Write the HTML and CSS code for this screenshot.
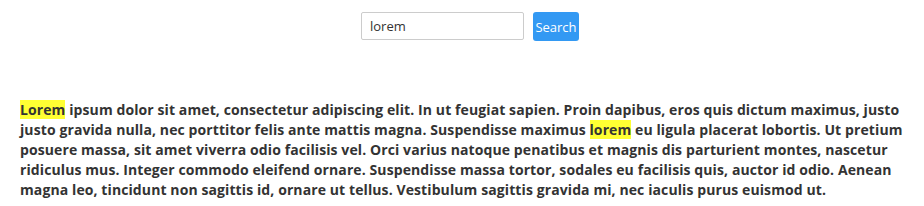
FILE: index.html
```html
<!DOCTYPE html>
<html>
<head>
<meta charset="utf-8">
<link rel="stylesheet" href="styles.css">
</head>
<body>
<form class="search">
  <input class="search-input" type="text" value="lorem">
  <button class="search-btn" type="button">Search</button>
</form>
<p class="content"><mark class="hl">Lorem</mark> ipsum dolor sit amet, consectetur adipiscing elit. In ut feugiat sapien. Proin dapibus, eros quis dictum maximus, justo justo gravida nulla, nec porttitor felis ante mattis magna. Suspendisse maximus <mark class="hl">lorem</mark> eu ligula placerat lobortis. Ut pretium posuere massa, sit amet viverra odio facilisis vel. Orci varius natoque penatibus et magnis dis parturient montes, nascetur ridiculus mus. Integer commodo eleifend ornare. Suspendisse massa tortor, sodales eu facilisis quis, auctor id odio. Aenean magna leo, tincidunt non sagittis id, ornare ut tellus. Vestibulum sagittis gravida mi, nec iaculis purus euismod ut.</p>
</body>
</html>
```
FILE: styles.css
```css
html, body {
  margin: 0;
  padding: 0;
  background: #fff;
}
body {
  font-family: "Open Sans", "Noto Sans", sans-serif;
  color: #333;
}
.search {
  display: flex;
  justify-content: center;
  align-items: flex-start;
  gap: 9px;
  padding-top: 12px;
  padding-left: 16px;
  margin: 0;
}
.search-input {
  box-sizing: border-box;
  width: 163px;
  height: 28px;
  border: 1px solid #cccccc;
  border-radius: 2px;
  padding: 0 8px;
  font-family: "Open Sans", sans-serif;
  font-size: 13px;
  color: #333;
  outline: none;
  margin: 0;
}
.search-btn {
  box-sizing: border-box;
  width: 46px;
  height: 29px;
  border: none;
  border-radius: 3px;
  background: #3399f3;
  color: #fff;
  font-family: "Open Sans", sans-serif;
  font-size: 13px;
  padding: 0;
  margin: 0;
}
.content {
  margin: 59px 20px 0 20px;
  font-weight: bold;
  font-size: 14px;
  line-height: 20px;
  letter-spacing: 0.1px;
  color: #333;
}
.hl {
  background: #ffff33;
  color: #333;
  padding: 0;
}
```
